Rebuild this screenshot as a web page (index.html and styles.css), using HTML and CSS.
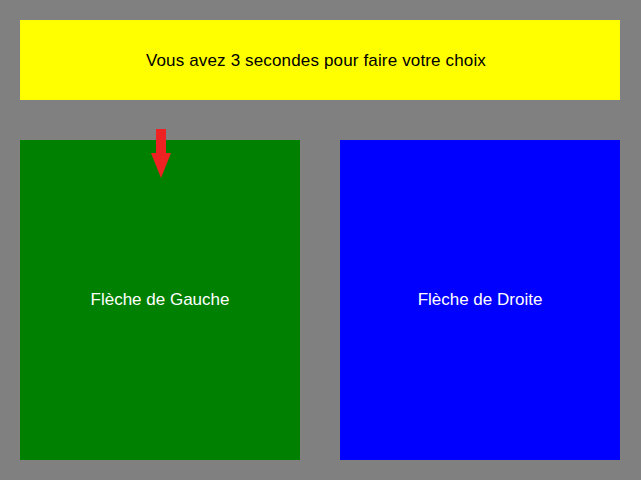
FILE: index.html
```html
<!DOCTYPE html>
<html lang="fr">
<head>
<meta charset="utf-8">
<link rel="stylesheet" href="styles.css">
</head>
<body>
<div class="screen">
  <div class="banner">Vous avez 3 secondes pour faire votre choix</div>
  <div class="choices">
    <div class="choice left">
      <svg class="arrow" width="22" height="50" viewBox="0 0 22 50"><polygon points="6,0 16,0 16,24 21,24 11,49 1,24 6,24" fill="#ee2222"/></svg>
      Flèche de Gauche
    </div>
    <div class="choice right">Flèche de Droite</div>
  </div>
</div>
</body>
</html>
```
FILE: styles.css
```css
html, body { margin: 0; padding: 0; }
body {
  background: #808080;
  font-family: "Liberation Sans", Arial, sans-serif;
  width: 641px;
  height: 480px;
  overflow: hidden;
}
.screen {
  padding: 20px 21px 20px 20px;
  display: flex;
  flex-direction: column;
  gap: 40px;
}
.banner {
  height: 80px;
  padding-top: 2px;
  box-sizing: border-box;
  background: #ffff00;
  color: #000;
  font-size: 17px;
  letter-spacing: 0.15px;
  padding-right: 8px;
  display: flex;
  align-items: center;
  justify-content: center;
}
.choices {
  display: flex;
  gap: 40px;
}
.choice {
  position: relative;
  width: 280px;
  height: 320px;
  color: #fff;
  font-size: 17px;
  display: flex;
  align-items: center;
  justify-content: center;
}
.left { background: #008000; }
.right { background: #0000ff; }
.arrow {
  position: absolute;
  left: 130px;
  top: -11px;
}
```
